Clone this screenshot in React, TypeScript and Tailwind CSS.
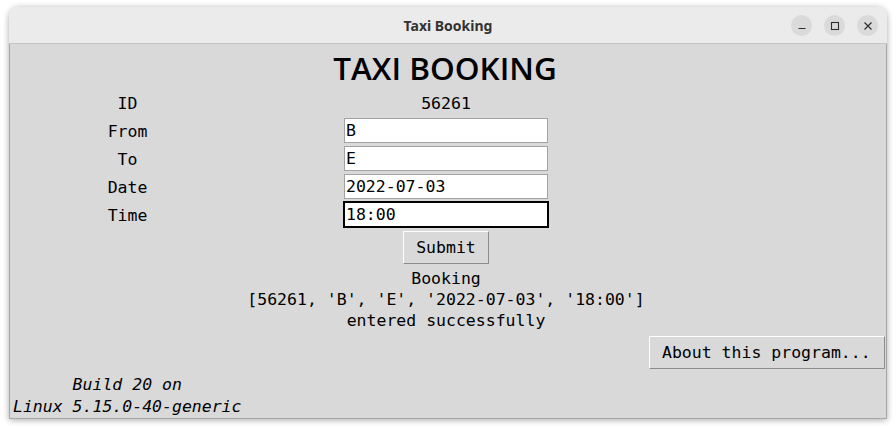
import React from "react";

const mono = { fontFamily: '"DejaVu Sans Mono", monospace' };

function Entry({ value, focused }: { value: string; focused?: boolean }) {
  return (
    <div className={`h-[27px] w-[206px] p-[1px] ${focused ? "bg-black" : "bg-[#d9d9d9]"}`}>
      <div
        className={`h-full w-full bg-white border ${focused ? "border-black" : "border-[#a3a3a3]"} flex items-center pl-[1px] pt-[2px] text-[16.5px] text-black leading-none`}
        style={mono}
      >
        {value}
      </div>
    </div>
  );
}

function Label({ text }: { text: string }) {
  return (
    <div className="h-[28px] flex items-center justify-center pt-[3px] text-[16.5px] text-black" style={mono}>
      {text}
    </div>
  );
}

function TkButton({ text, className }: { text: string; className?: string }) {
  return (
    <div
      className={`h-[33px] bg-[#d9d9d9] border border-t-white border-l-white border-b-[#8c8c8c] border-r-[#8c8c8c] flex items-center pt-[1px] text-[16.5px] text-black ${className ?? ""}`}
      style={mono}
    >
      {text}
    </div>
  );
}

export default function App() {
  return (
    <div className="w-[896px] h-[429px] bg-white pl-[9px] pt-[7px] overflow-hidden">
      <div className="w-[878px] h-[412px] rounded-t-[10px] shadow-[0_1px_6px_rgba(0,0,0,0.35)] flex flex-col overflow-hidden">
        {/* title bar */}
        <div className="relative h-[37px] bg-[#ebebeb] border-b border-[#c4c4c4] flex items-center justify-center shrink-0">
          <span
            className="text-[14px] font-bold text-[#333333]"
            style={{ fontFamily: '"Noto Sans", sans-serif' }}
          >
            Taxi Booking
          </span>
          <div className="absolute right-[9px] top-[8px] flex gap-[12px]">
            <div className="w-[21px] h-[21px] rounded-full bg-[#dadada] flex items-center justify-center">
              <svg width="10" height="10" viewBox="0 0 10 10">
                <line x1="1.5" y1="7.5" x2="8.5" y2="7.5" stroke="#2e2e2e" strokeWidth="1.2" />
              </svg>
            </div>
            <div className="w-[21px] h-[21px] rounded-full bg-[#dadada] flex items-center justify-center">
              <svg width="10" height="10" viewBox="0 0 10 10">
                <rect x="1.5" y="1.5" width="7" height="7" fill="none" stroke="#2e2e2e" strokeWidth="1.1" />
              </svg>
            </div>
            <div className="w-[21px] h-[21px] rounded-full bg-[#dadada] flex items-center justify-center">
              <svg width="10" height="10" viewBox="0 0 10 10">
                <path d="M1.5 1.5 L8.5 8.5 M8.5 1.5 L1.5 8.5" stroke="#2e2e2e" strokeWidth="1.2" />
              </svg>
            </div>
          </div>
        </div>

        {/* content */}
        <div className="flex-1 bg-[#d9d9d9] border-x border-b border-[#a6a6a6] flex flex-col">
          <div
            className="h-[45px] flex items-center justify-center pr-[6px] pt-[3px] text-[31.5px] font-semibold text-black"
            style={{ fontFamily: '"Open Sans", sans-serif' }}
          >
            TAXI BOOKING
          </div>

          <div className="grid grid-cols-[235px_206px] gap-x-[98px]">
            <Label text="ID" />
            <Label text="56261" />
            <Label text="From" />
            <div className="h-[28px]"><Entry value="B" /></div>
            <Label text="To" />
            <div className="h-[28px]"><Entry value="E" /></div>
            <Label text="Date" />
            <div className="h-[28px]"><Entry value="2022-07-03" /></div>
            <Label text="Time" />
            <div className="h-[28px]"><Entry value="18:00" focused /></div>
            <div />
            <div className="flex justify-center mt-[2px]">
              <TkButton text="Submit" className="w-[86px] justify-center" />
            </div>
          </div>

          <div
            className="mt-[4px] flex flex-col items-center pr-[4px] text-[16.5px] leading-[21px] text-black"
            style={mono}
          >
            <div>Booking</div>
            <div>[56261, 'B', 'E', '2022-07-03', '18:00']</div>
            <div>entered successfully</div>
          </div>

          <div className="mt-[5px] flex justify-end pr-[1px]">
            <TkButton text="About this program..." className="w-[236px] pl-[12px]" />
          </div>

          <div
            className="mt-[5px] pl-[3px] inline-flex flex-col items-center self-start italic text-[16.5px] leading-[22px] text-black"
            style={mono}
          >
            <div>Build 20 on</div>
            <div>Linux 5.15.0-40-generic</div>
          </div>
        </div>
      </div>
    </div>
  );
}
